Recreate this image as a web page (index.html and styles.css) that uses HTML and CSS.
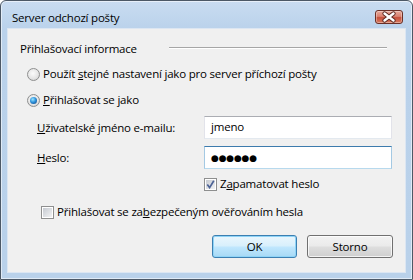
FILE: index.html
```html
<!DOCTYPE html>
<html lang="cs">
<head>
    <meta charset="UTF-8">
    <title>Server odchozí pošty</title>
    <link rel="stylesheet" href="styles.css">
</head>
<body>
    <div class="window">
        <div class="titlebar">
            <span class="title">Server odchozí pošty</span>
            <span class="close">
                <svg width="26" height="12" viewBox="0 0 26 12">
                    <path d="M8.5 2.5 L17.5 9.5 M17.5 2.5 L8.5 9.5" stroke="#5a2820" stroke-width="4.2" stroke-linecap="round" fill="none"/>
                    <path d="M8.5 2.5 L17.5 9.5 M17.5 2.5 L8.5 9.5" stroke="#ffffff" stroke-width="2.4" stroke-linecap="round" fill="none"/>
                </svg>
            </span>
        </div>
        <div class="client">
            <div class="group-head">
                <span>Přihlašovací informace</span>
                <span class="rule"></span>
            </div>
            <div class="option radio-first">
                <span class="radio"></span>
                <span>Použít <u>s</u>tejné nastavení jako pro server příchozí pošty</span>
            </div>
            <div class="option radio-second">
                <span class="radio on"></span>
                <span><u>P</u>řihlašovat se jako</span>
            </div>
            <div class="field">
                <span class="field-label"><u>U</u>živatelské jméno e-mailu:</span>
                <span class="textbox">jmeno</span>
            </div>
            <div class="field field-second">
                <span class="field-label"><u>H</u>eslo:</span>
                <span class="textbox hot"><span class="dots">●●●●●●</span></span>
            </div>
            <div class="option remember">
                <span class="check">
                    <svg width="9" height="9" viewBox="0 0 9 9">
                        <path d="M1.3 4.6 L3.6 7.6 L7.8 0.8" stroke="#4d6396" stroke-width="1.7" fill="none"/>
                    </svg>
                </span>
                <span>Z<u>a</u>pamatovat heslo</span>
            </div>
            <div class="option secure">
                <span class="check"></span>
                <span>Přihlašovat se za<u>b</u>ezpečeným ověřováním hesla</span>
            </div>
            <div class="buttons">
                <span class="button default">OK</span>
                <span class="button">Storno</span>
            </div>
        </div>
    </div>
</body>
</html>
```

FILE: styles.css
```css
body {
    margin: 0;
    font-family: "Segoe UI", "Open Sans", sans-serif;
    font-size: 11.5px;
    letter-spacing: -0.2px;
    color: #000;
    background-color: #fff;
}
.window {
    width: 413px;
    height: 280px;
    box-sizing: border-box;
    border: 1px solid #4c5866;
    border-radius: 6px 6px 0 0;
    background: linear-gradient(#c9dcf1, #bad2eb 28px, #b9d1ea);
    box-shadow: inset 0 0 0 1px rgba(255, 255, 255, 0.55);
    display: flex;
    flex-direction: column;
}
.titlebar {
    height: 28px;
    display: flex;
    justify-content: space-between;
    align-items: flex-start;
}
.title {
    margin: 9px 0 0 11px;
    line-height: 16px;
}
.close {
    margin: 9px 9px 0 0;
    width: 28px;
    height: 14px;
    box-sizing: border-box;
    border: 1px solid #6b2f26;
    border-radius: 3px;
    background: linear-gradient(#e9a99a, #d98170 45%, #c7503c 55%, #d67a5e);
    box-shadow: inset 0 0 0 1px rgba(255, 255, 255, 0.35);
    display: flex;
    align-items: center;
    justify-content: center;
}
.client {
    margin: 0 7px;
    height: 243px;
    background-color: #f0f0f0;
    box-shadow: 0 0 0 1px #dce6f2;
    padding-top: 11px;
    box-sizing: border-box;
}
.group-head {
    margin-left: 12px;
    width: 367px;
    height: 18px;
    display: flex;
    justify-content: space-between;
    line-height: 18px;
}
.rule {
    width: 218px;
    margin-top: 7px;
    height: 0;
    border-top: 1px solid #a6a6a6;
    border-bottom: 1px solid #ffffff;
}
.option {
    display: flex;
    align-items: center;
    height: 18px;
    line-height: 18px;
}
.radio-first {
    margin: 7px 0 0 19px;
}
.radio-second {
    margin: 8px 0 0 19px;
}
.radio {
    flex: none;
    width: 13px;
    height: 13px;
    box-sizing: border-box;
    border: 1px solid #8e8f8f;
    border-radius: 50%;
    margin-right: 3px;
    background: radial-gradient(circle at 45% 40%, #fbfbfb 0, #e6e6e6 55%, #c9c9c9 100%);
    display: flex;
    align-items: center;
    justify-content: center;
}
.radio.on::after {
    content: "";
    width: 7px;
    height: 7px;
    border-radius: 50%;
    background: radial-gradient(circle at 40% 35%, #9be6ff 0, #2f93dc 45%, #0c3a78 100%);
}
.field {
    margin: 7px 0 0 29px;
    height: 23px;
    display: flex;
    align-items: center;
}
.field-second {
    margin-top: 7px;
}
.field-label {
    width: 167px;
}
.textbox {
    width: 188px;
    height: 23px;
    box-sizing: border-box;
    border: 1px solid;
    border-color: #abadb3 #e2e3ea #e3e9ef #e2e3ea;
    background-color: #fff;
    padding-left: 6px;
    line-height: 20px;
}
.textbox.hot {
    border-color: #3d7bad #a4c9e3 #b7d9ed #a4c9e3;
}
.dots {
    font-family: "DejaVu Sans", sans-serif;
    font-size: 9px;
    letter-spacing: -0.2px;
}
.remember {
    margin: 6px 0 0 196px;
}
.secure {
    margin: 10px 0 0 33px;
}
.check {
    flex: none;
    width: 13px;
    height: 13px;
    box-sizing: border-box;
    border: 1px solid #8e8f8f;
    padding: 1px;
    margin-right: 3px;
    background: linear-gradient(135deg, #c6cad1, #f2f3f4) content-box, #ffffff;
    display: flex;
}
.buttons {
    margin-top: 14px;
    padding-right: 12px;
    display: flex;
    justify-content: flex-end;
    gap: 10px;
}
.button {
    width: 86px;
    height: 23px;
    box-sizing: border-box;
    border: 1px solid #707070;
    border-radius: 3px;
    background: linear-gradient(#f2f2f2, #ebebeb 45%, #dddddd 55%, #cfcfcf);
    box-shadow: inset 0 0 0 1px rgba(255, 255, 255, 0.75);
    display: flex;
    align-items: center;
    justify-content: center;
}
.button.default {
    width: 85px;
    border-color: #3c7fb1;
    background: linear-gradient(#eaf6fd, #d9f0fc 45%, #bee6fd 55%, #a7d9f5);
    box-shadow: inset 0 0 0 1px #8fd4f7;
}
```
